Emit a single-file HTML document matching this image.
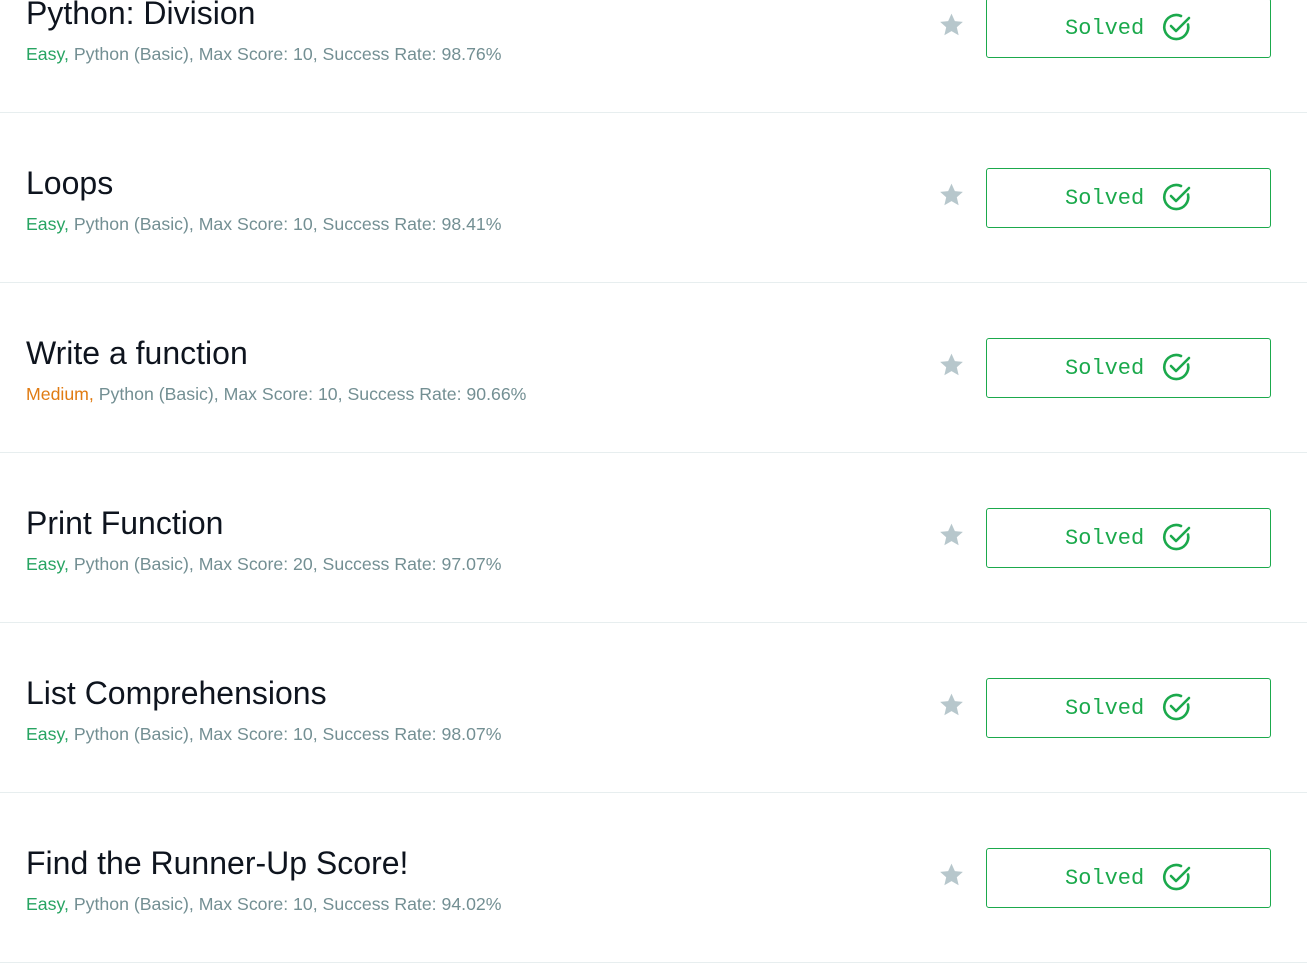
<!DOCTYPE html>
<html><head><style>
body{margin:0;width:1307px;height:882px;overflow:hidden;background:#fff;font-family:"Liberation Sans",sans-serif;position:relative}
.row{position:absolute;left:0;width:1307px;height:170px;border-bottom:1px solid #e7eeef}
.t{position:absolute;left:26px;top:53px;font-size:32px;color:#0e141e;white-space:nowrap;line-height:36px}
.s{position:absolute;left:26px;top:101px;font-size:17.7px;color:#738f93;white-space:nowrap;line-height:22px}
.e{color:#27a462}.m{color:#e07b12}
.star{position:absolute;left:938px;top:70px}
.b{position:absolute;left:986px;top:56px;width:283px;height:58px;border:1px solid #1ba94c;border-radius:3px;box-sizing:content-box}
.b span{position:absolute;left:78px;top:17px;font-family:"Liberation Mono",monospace;font-size:22px;color:#1ba94c;line-height:26px}
.b svg{position:absolute;left:174px;top:12px}
</style></head><body>
<div class="row" style="top:-58px"><div class="t">Python: Division</div><div class="s"><span class="e">Easy,</span> Python (Basic), Max Score: 10, Success Rate: 98.76%</div>
<svg class="star" width="27" height="26" viewBox="0 0 24 24"><path fill="#b7c7cc" d="M12 1.5l3.1 6.9 7.4.7-5.6 5 1.7 7.4L12 17.6l-6.6 3.9 1.7-7.4-5.6-5 7.4-.7z"/></svg>
<div class="b"><span>Solved</span><svg width="32" height="32" viewBox="0 0 32 32"><path d="M27 13.5A12 12 0 1 1 20 5" fill="none" stroke="#1ba94c" stroke-width="2.6" stroke-linecap="round"/><path d="M10 15l5 5 13-13" fill="none" stroke="#1ba94c" stroke-width="2.6" stroke-linecap="round" stroke-linejoin="round"/></svg></div></div>
<div class="row" style="top:112px"><div class="t">Loops</div><div class="s"><span class="e">Easy,</span> Python (Basic), Max Score: 10, Success Rate: 98.41%</div>
<svg class="star" width="27" height="26" viewBox="0 0 24 24"><path fill="#b7c7cc" d="M12 1.5l3.1 6.9 7.4.7-5.6 5 1.7 7.4L12 17.6l-6.6 3.9 1.7-7.4-5.6-5 7.4-.7z"/></svg>
<div class="b"><span>Solved</span><svg width="32" height="32" viewBox="0 0 32 32"><path d="M27 13.5A12 12 0 1 1 20 5" fill="none" stroke="#1ba94c" stroke-width="2.6" stroke-linecap="round"/><path d="M10 15l5 5 13-13" fill="none" stroke="#1ba94c" stroke-width="2.6" stroke-linecap="round" stroke-linejoin="round"/></svg></div></div>
<div class="row" style="top:282px"><div class="t">Write a function</div><div class="s"><span class="m">Medium,</span> Python (Basic), Max Score: 10, Success Rate: 90.66%</div>
<svg class="star" width="27" height="26" viewBox="0 0 24 24"><path fill="#b7c7cc" d="M12 1.5l3.1 6.9 7.4.7-5.6 5 1.7 7.4L12 17.6l-6.6 3.9 1.7-7.4-5.6-5 7.4-.7z"/></svg>
<div class="b"><span>Solved</span><svg width="32" height="32" viewBox="0 0 32 32"><path d="M27 13.5A12 12 0 1 1 20 5" fill="none" stroke="#1ba94c" stroke-width="2.6" stroke-linecap="round"/><path d="M10 15l5 5 13-13" fill="none" stroke="#1ba94c" stroke-width="2.6" stroke-linecap="round" stroke-linejoin="round"/></svg></div></div>
<div class="row" style="top:452px"><div class="t">Print Function</div><div class="s"><span class="e">Easy,</span> Python (Basic), Max Score: 20, Success Rate: 97.07%</div>
<svg class="star" width="27" height="26" viewBox="0 0 24 24"><path fill="#b7c7cc" d="M12 1.5l3.1 6.9 7.4.7-5.6 5 1.7 7.4L12 17.6l-6.6 3.9 1.7-7.4-5.6-5 7.4-.7z"/></svg>
<div class="b"><span>Solved</span><svg width="32" height="32" viewBox="0 0 32 32"><path d="M27 13.5A12 12 0 1 1 20 5" fill="none" stroke="#1ba94c" stroke-width="2.6" stroke-linecap="round"/><path d="M10 15l5 5 13-13" fill="none" stroke="#1ba94c" stroke-width="2.6" stroke-linecap="round" stroke-linejoin="round"/></svg></div></div>
<div class="row" style="top:622px"><div class="t">List Comprehensions</div><div class="s"><span class="e">Easy,</span> Python (Basic), Max Score: 10, Success Rate: 98.07%</div>
<svg class="star" width="27" height="26" viewBox="0 0 24 24"><path fill="#b7c7cc" d="M12 1.5l3.1 6.9 7.4.7-5.6 5 1.7 7.4L12 17.6l-6.6 3.9 1.7-7.4-5.6-5 7.4-.7z"/></svg>
<div class="b"><span>Solved</span><svg width="32" height="32" viewBox="0 0 32 32"><path d="M27 13.5A12 12 0 1 1 20 5" fill="none" stroke="#1ba94c" stroke-width="2.6" stroke-linecap="round"/><path d="M10 15l5 5 13-13" fill="none" stroke="#1ba94c" stroke-width="2.6" stroke-linecap="round" stroke-linejoin="round"/></svg></div></div>
<div class="row" style="top:792px"><div class="t">Find the Runner-Up Score!</div><div class="s"><span class="e">Easy,</span> Python (Basic), Max Score: 10, Success Rate: 94.02%</div>
<svg class="star" width="27" height="26" viewBox="0 0 24 24"><path fill="#b7c7cc" d="M12 1.5l3.1 6.9 7.4.7-5.6 5 1.7 7.4L12 17.6l-6.6 3.9 1.7-7.4-5.6-5 7.4-.7z"/></svg>
<div class="b"><span>Solved</span><svg width="32" height="32" viewBox="0 0 32 32"><path d="M27 13.5A12 12 0 1 1 20 5" fill="none" stroke="#1ba94c" stroke-width="2.6" stroke-linecap="round"/><path d="M10 15l5 5 13-13" fill="none" stroke="#1ba94c" stroke-width="2.6" stroke-linecap="round" stroke-linejoin="round"/></svg></div></div>
</body></html>
